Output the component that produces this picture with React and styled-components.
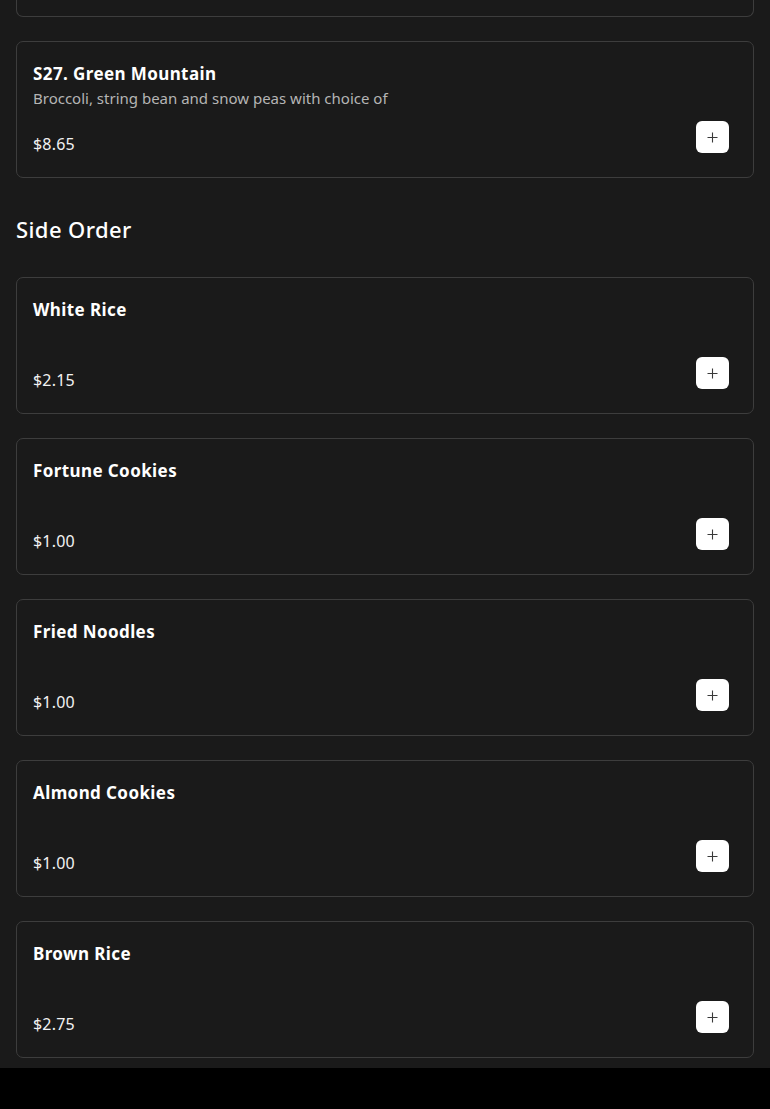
import React from "react";
import styled, { createGlobalStyle } from "styled-components";

const Global = createGlobalStyle`
  html, body { margin: 0; padding: 0; background: #000; }
  body { font-family: "Noto Sans", "Open Sans", sans-serif; color: #fff; }
  * { box-sizing: border-box; }
`;

const Page = styled.main`
  background: #1a1a1a;
  padding: 0 16px 10px;
`;

const List = styled.div`
  display: flex;
  flex-direction: column;
  gap: 24px;
`;

const SectionTitle = styled.h2`
  margin: 35px 0 32px;
  font-size: 22px;
  line-height: 32px;
  font-weight: 500;
  color: #fff;
  letter-spacing: 0.4px;
`;

const Card = styled.article`
  border: 1px solid #3d3d3d;
  border-radius: 7px;
  background: #1a1a1a;
  padding: 16px 24px 21px 16px;
  height: 137px;
  display: flex;
  flex-direction: column;
`;

/* bottom edge of the previous card, scrolled mostly out of view */
const CardTail = styled.div`
  height: 17px;
  border: 1px solid #3d3d3d;
  border-top: none;
  border-radius: 0 0 7px 7px;
  background: #1a1a1a;
`;

const Info = styled.div`
  min-height: 50px;
`;

const Name = styled.h3`
  margin: 0;
  font-size: 17px;
  line-height: 31px;
  font-weight: 700;
  color: #fff;
  letter-spacing: 0.4px;
`;

const Desc = styled.p`
  margin: 0;
  font-size: 15px;
  line-height: 19px;
  color: #b5b5b5;
  font-weight: 400;
`;

const Footer = styled.div`
  display: flex;
  justify-content: space-between;
  align-items: flex-start;
  margin-top: 13px;
`;

const Price = styled.span`
  margin-top: 11px;
  font-size: 16px;
  line-height: 24px;
  color: #f2f2f2;
  letter-spacing: 0.2px;
`;

const AddButton = styled.button`
  width: 33px;
  height: 32px;
  border: none;
  border-radius: 6px;
  background: #fff;
  display: flex;
  align-items: center;
  justify-content: center;
  padding: 0;
  cursor: pointer;
`;

const PlusIcon = () => (
  <svg width="11" height="11" viewBox="0 0 11 11" fill="none">
    <path d="M5.5 0.5v10M0.5 5.5h10" stroke="#3a3a3a" strokeWidth="1.1" />
  </svg>
);

const Item = ({ name, desc, price }) => (
  <Card>
    <Info>
      <Name>{name}</Name>
      {desc && <Desc>{desc}</Desc>}
    </Info>
    <Footer>
      <Price>{price}</Price>
      <AddButton aria-label={`Add ${name}`}>
        <PlusIcon />
      </AddButton>
    </Footer>
  </Card>
);

const sides = [
  { name: "White Rice", price: "$2.15" },
  { name: "Fortune Cookies", price: "$1.00" },
  { name: "Fried Noodles", price: "$1.00" },
  { name: "Almond Cookies", price: "$1.00" },
  { name: "Brown Rice", price: "$2.75" },
];

export default function App() {
  return (
    <>
      <Global />
      <Page>
        <List>
          <CardTail />
          <Item
            name="S27. Green Mountain"
            desc="Broccoli, string bean and snow peas with choice of"
            price="$8.65"
          />
        </List>
        <SectionTitle>Side Order</SectionTitle>
        <List>
          {sides.map((s) => (
            <Item key={s.name} {...s} />
          ))}
        </List>
      </Page>
    </>
  );
}
